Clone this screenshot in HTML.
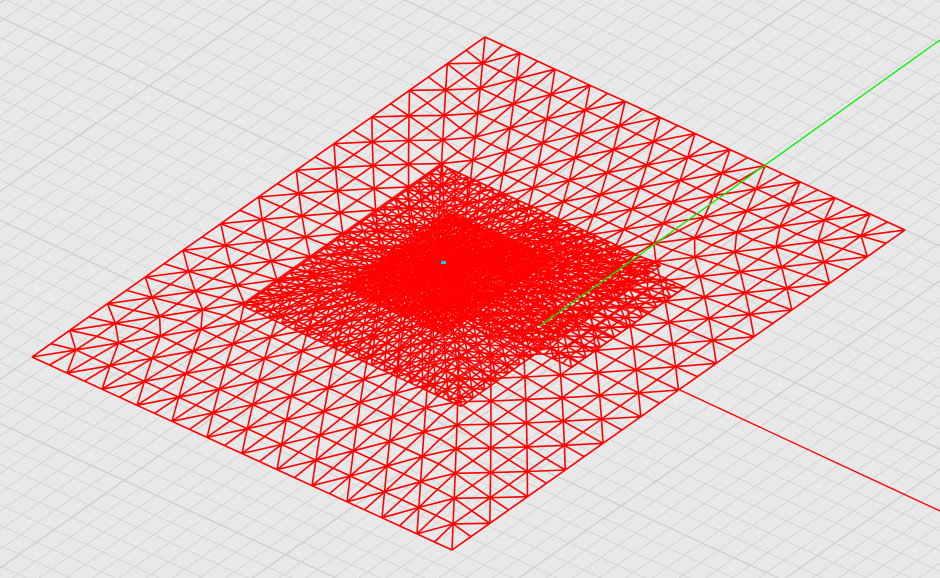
<!DOCTYPE html>
<html><head><meta charset="utf-8"><style>
html,body{margin:0;padding:0;background:#e8e8e8;overflow:hidden;width:940px;height:578px}
svg{display:block;overflow:hidden}
</style></head><body>
<svg id="s" width="940" height="578" viewBox="0 0 940 578" xmlns="http://www.w3.org/2000/svg">
<rect width="940" height="578" fill="#e8e8e8"/>
<g id="grid" stroke="#d6d6d6" stroke-width="1" fill="none"></g>
<g id="mesh" stroke="#ff0000" stroke-width="1.6" fill="none"></g>
<line x1="540" y1="326" x2="940" y2="40" stroke="#00ee00" stroke-width="1.3"/>
<line x1="680" y1="390" x2="940" y2="511" stroke="#ff0000" stroke-width="1.3"/>
<rect x="441" y="261" width="5" height="3" fill="#00d8e8"/>
</svg>
<script>
(function(){
var NS="http://www.w3.org/2000/svg";
var g=document.getElementById('grid'),m=document.getElementById('mesh');
var T=[485,37],A=[420,193],B=[-453,320];
var k=26,a=[A[0]/k,A[1]/k],b=[-B[0]/k,-B[1]/k];
function ln(par,x1,y1,x2,y2,w,c){var l=document.createElementNS(NS,'line');l.setAttribute('x1',x1.toFixed(1));l.setAttribute('y1',y1.toFixed(1));l.setAttribute('x2',x2.toFixed(1));l.setAttribute('y2',y2.toFixed(1));if(w)l.setAttribute('stroke-width',w);if(c)l.setAttribute('stroke',c);par.appendChild(l);}
var R=60;
for(var i=-R;i<=R;i++){
 var maj=(i%10==0);
 ln(g,T[0]+a[0]*i-b[0]*R,T[1]+a[1]*i-b[1]*R,T[0]+a[0]*i+b[0]*R,T[1]+a[1]*i+b[1]*R,maj?1.6:1,maj?'#d2d2d2':null);
 ln(g,T[0]+b[0]*i-a[0]*R,T[1]+b[1]*i-a[1]*R,T[0]+b[0]*i+a[0]*R,T[1]+b[1]*i+a[1]*R,maj?1.6:1,maj?'#d2d2d2':null);
}
function mesh(u0,u1,v0,v1,cu,cv,N,pw){
 function P(i,j){
  var u=u0+(u1-u0)*i/N,v=v0+(v1-v0)*j/N;
  var x=(u-cu)/(u<cu?cu-u0:u1-cu), y=(v-cv)/(v<cv?cv-v0:v1-cv);
  var s=Math.max(Math.abs(x),Math.abs(y));
  var f=s>0?Math.pow(s,pw):0;
  x*=f;y*=f;
  u=cu+x*(x<0?cu-u0:u1-cu); v=cv+y*(y<0?cv-v0:v1-cv);
  return [T[0]+A[0]*u+B[0]*v,T[1]+A[1]*u+B[1]*v];}
 var pts=[];for(var i=0;i<=N;i++){pts[i]=[];for(var j=0;j<=N;j++)pts[i][j]=P(i,j);}
 for(var i=0;i<=N;i++)for(var j=0;j<=N;j++){
  var p=pts[i][j];
  if(i<N){var q=pts[i+1][j];ln(m,p[0],p[1],q[0],q[1]);}
  if(j<N){var q=pts[i][j+1];ln(m,p[0],p[1],q[0],q[1]);}
  if(i<N&&j<N){
   if((i+j)%2==0){var q=pts[i+1][j+1];ln(m,p[0],p[1],q[0],q[1]);}
   else{var r=pts[i+1][j],s=pts[i][j+1];ln(m,r[0],r[1],s[0],s[1]);}
  }
 }
}
mesh(0,1,0,1,0.394,0.465,24,0.25);
mesh(0.2,0.72,0.28,0.72,0.394,0.465,34,0.45);
mesh(0.3,0.55,0.36,0.6,0.394,0.465,26,0.3);
mesh(0.45,0.8,0.3,0.55,0.6,0.42,16,0.2);
})();
</script>
</body></html>
